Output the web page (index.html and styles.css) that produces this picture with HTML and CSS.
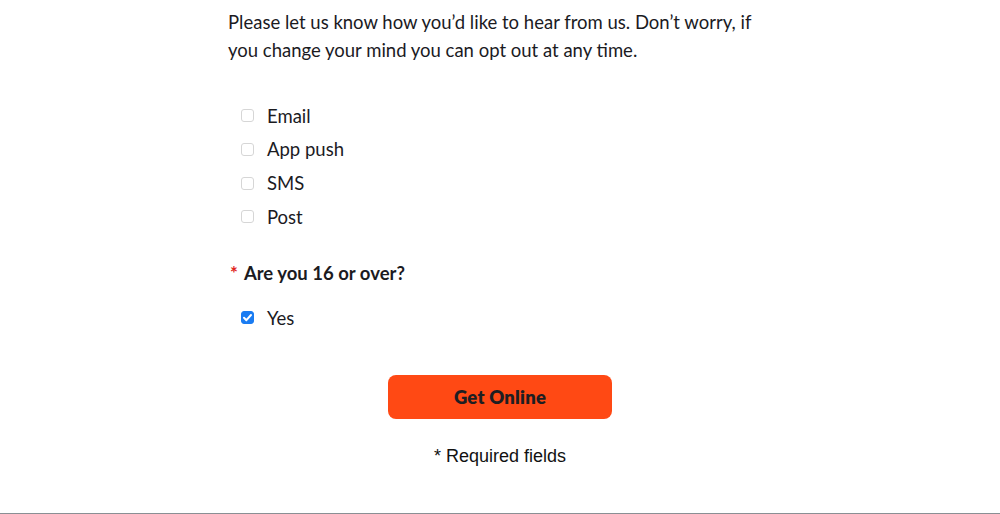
FILE: index.html
```html
<!DOCTYPE html>
<html lang="en">
<head>
<meta charset="utf-8">
<link rel="stylesheet" href="styles.css">
</head>
<body>
<main class="page">
  <form class="form">
    <p class="intro">Please let us know how you’d like to hear from us. Don’t worry, if you change your mind you can opt out at any time.</p>
    <ul class="options">
      <li class="option"><span class="box"></span><span class="label">Email</span></li>
      <li class="option"><span class="box"></span><span class="label">App push</span></li>
      <li class="option"><span class="box"></span><span class="label">SMS</span></li>
      <li class="option"><span class="box"></span><span class="label">Post</span></li>
    </ul>
    <h3 class="question"><span class="req">*</span>Are you 16 or over?</h3>
    <ul class="options single">
      <li class="option"><span class="box checked"><svg viewBox="0 0 13 13" width="13" height="13"><path d="M3 6.8 L5.4 9.2 L10 4" fill="none" stroke="#fff" stroke-width="2" stroke-linecap="round" stroke-linejoin="round"/></svg></span><span class="label">Yes</span></li>
    </ul>
    <div class="actions">
      <button type="button" class="submit">Get Online</button>
      <p class="note">* Required fields</p>
    </div>
  </form>
</main>
<footer class="rule"></footer>
</body>
</html>
```
FILE: styles.css
```css
* { box-sizing: border-box; }
html, body { margin: 0; padding: 0; }
body {
  background: #fff;
  color: #1b1b1f;
  font-family: "Lato", "Noto Sans", sans-serif;
  height: 514px;
  display: flex;
  flex-direction: column;
}
.page {
  flex: 1;
  display: flex;
  justify-content: center;
}
.form {
  width: 544px;
  padding-top: 8px;
}
.intro {
  margin: 0;
  font-size: 18.5px;
  line-height: 28px;
}
.options {
  list-style: none;
  margin: 0;
  padding: 40px 0 0 13px;
  display: flex;
  flex-direction: column;
  gap: 10.8px;
}
.option {
  display: flex;
  align-items: center;
  height: 23px;
  font-size: 18.5px;
}
.box {
  width: 13px;
  height: 13px;
  border: 1px solid #d6d6d6;
  border-radius: 3px;
  background: #fff;
  margin-right: 13px;
  flex: none;
  display: flex;
}
.box.checked {
  background: #1a7cf2;
  border-color: #1a7cf2;
}
.box.checked svg { margin: -1px; }
.question {
  margin: 32.5px 0 0 0;
  font-size: 18.5px;
  font-weight: 700;
  line-height: 24px;
  padding-left: 2px;
}
.req {
  color: #e0261b;
  margin-right: 6px;
}
.single { padding-top: 21.5px; }
.actions {
  display: flex;
  flex-direction: column;
  align-items: center;
  padding-top: 46px;
}
.submit {
  width: 224px;
  height: 44px;
  border: none;
  border-radius: 8px;
  background: #ff4914;
  color: #1e1e22;
  font-family: "Lato", sans-serif;
  font-weight: 800;
  font-size: 18.5px;
  letter-spacing: 0.2px;
  cursor: pointer;
}
.note {
  margin: 27px 0 0 0;
  font-family: "Liberation Sans", Arial, sans-serif;
  font-size: 18px;
  color: #111;
}
.rule {
  height: 1px;
  background: #8a8f94;
}
```
